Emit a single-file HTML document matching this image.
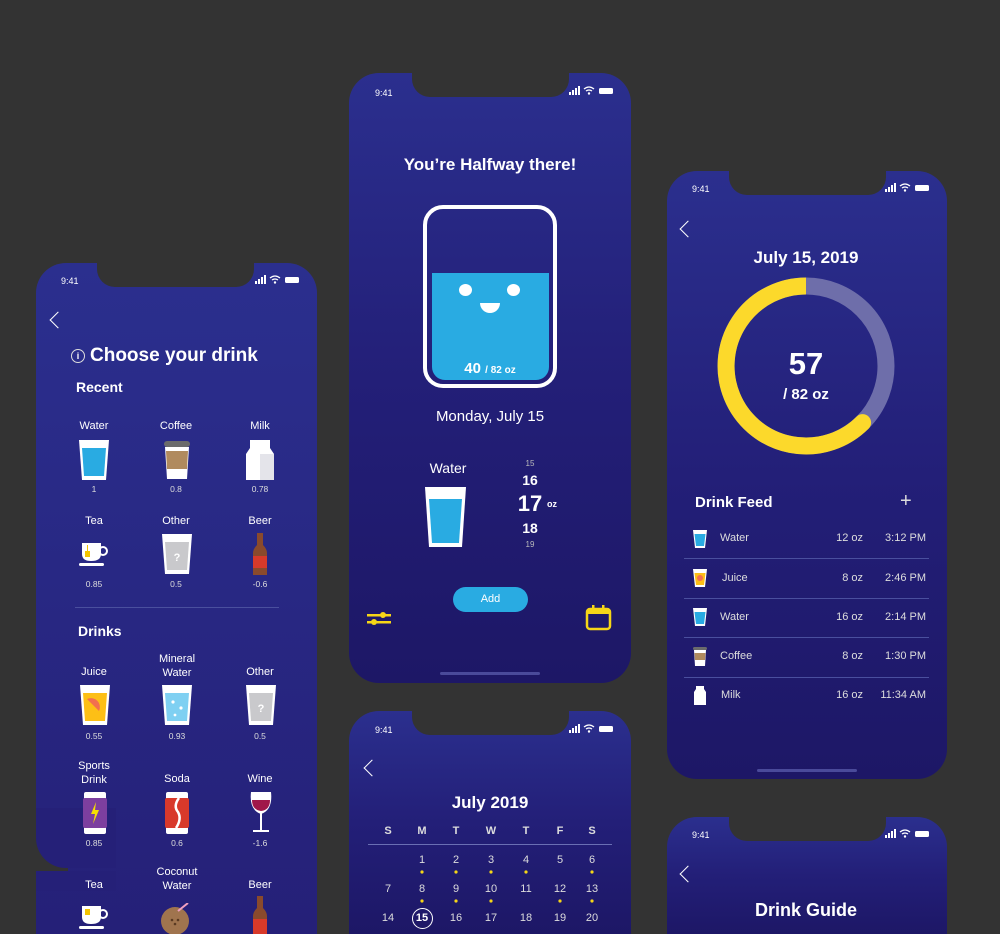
<!DOCTYPE html>
<html><head><meta charset="utf-8"><style>
*{margin:0;padding:0;box-sizing:border-box}
html,body{width:1000px;height:934px;overflow:hidden;background:#333}
body{font-family:"Liberation Sans",sans-serif;color:#fff}
#w{position:relative;width:1000px;height:934px;overflow:hidden;background:#333}
.ph{position:absolute;border-radius:30px;background:linear-gradient(180deg,#2b2f8e 0%,#231f78 50%,#1d1766 100%);overflow:hidden}
.notch{position:absolute;top:0;height:24px;background:#333;border-radius:0 0 18px 18px}
.t{position:absolute;white-space:nowrap}
.c{transform:translateX(-50%);text-align:center}
.bk{position:absolute;width:12px;height:12px;border-left:1.6px solid #fff;border-bottom:1.6px solid #fff;transform:rotate(45deg)}
.lbl{font-size:11px;font-weight:normal}
.val{font-size:8.5px;color:#ddd}
.dv{position:absolute;height:1px;background:#4a4f9e}
</style></head><body><div id="w">

<!-- LEFT PHONE -->
<div class="ph" style="left:36px;top:263px;width:281px;height:671px;border-radius:30px 30px 0 0;background:linear-gradient(180deg,#2b2f8e 0%,#252078 100%)"></div>
<div class="notch" style="left:97px;top:263px;width:157px"></div>
<div style="position:absolute;left:36px;top:838px;width:32px;height:33px;background:#333"></div>
<div style="position:absolute;left:36px;top:808px;width:80px;height:60px;background:#252078;border-bottom-left-radius:30px"></div>
<div style="position:absolute;left:36px;top:871px;width:80px;height:20px;background:#252078"></div>
<div class="t" style="left:61px;top:276px;font-size:9px">9:41</div>
<svg style="position:absolute;left:255px;top:275px" width="56" height="10"><rect x="0" y="6" width="2" height="3" fill="#fff"/><rect x="3" y="4" width="2" height="5" fill="#fff"/><rect x="6" y="2" width="2" height="7" fill="#fff"/><rect x="9" y="0" width="2" height="9" fill="#fff"/><path d="M15 3 Q20 -1 25 3 M17 5 Q20 3 23 5" stroke="#fff" stroke-width="1.3" fill="none"/><circle cx="20" cy="7.5" r="1.2" fill="#fff"/><rect x="30" y="2" width="14" height="6" rx="1.5" fill="#fff"/></svg>
<div class="bk" style="left:52px;top:314px"></div>
<div class="t" style="left:71px;top:345px;font-size:19px;font-weight:bold"><span style="display:inline-block;width:14px;height:14px;border:1.3px solid #ddd;border-radius:50%;font-size:9px;text-align:center;line-height:12px;vertical-align:2px;margin-right:5px">i</span>Choose your drink</div>
<div class="t" style="left:76px;top:379px;font-size:14px;font-weight:bold">Recent</div>

<div class="t c lbl" style="left:94px;top:420px">Water</div>
<div class="t c lbl" style="left:176px;top:420px">Coffee</div>
<div class="t c lbl" style="left:260px;top:420px">Milk</div>
<svg style="position:absolute;left:78px;top:440px" width="32" height="40"><path d="M1 0H31L28 40H4Z" fill="#fff"/><path d="M4 8H28L26 36H6Z" fill="#29abe2"/></svg>
<svg style="position:absolute;left:162px;top:441px" width="30" height="38"><rect x="2" y="0" width="26" height="6" rx="3" fill="#6b6b6b"/><path d="M3 6H27L25 38H5Z" fill="#fff"/><path d="M4 10H26L25 28H5Z" fill="#b08a5e"/></svg>
<svg style="position:absolute;left:246px;top:440px" width="28" height="40"><path d="M4 0H24V8L28 14V40H0V14L4 8Z" fill="#fff"/><path d="M14 14V40H28V14Z" fill="#e4e4ea"/></svg>
<div class="t c val" style="left:94px;top:484px">1</div>
<div class="t c val" style="left:176px;top:484px">0.8</div>
<div class="t c val" style="left:260px;top:484px">0.78</div>

<div class="t c lbl" style="left:94px;top:515px">Tea</div>
<div class="t c lbl" style="left:176px;top:515px">Other</div>
<div class="t c lbl" style="left:260px;top:515px">Beer</div>
<svg style="position:absolute;left:79px;top:543px" width="32" height="24"><path d="M3 0H22V11Q22 18 12 18Q3 18 3 11Z" fill="#fff"/><circle cx="24" cy="8" r="4" fill="none" stroke="#fff" stroke-width="2"/><rect x="0" y="20" width="25" height="3" rx="1.5" fill="#fff"/><rect x="8" y="2" width="1" height="7" fill="#f4c400"/><rect x="6" y="8" width="5" height="6" fill="#f4c400"/></svg>
<svg style="position:absolute;left:161px;top:534px" width="32" height="40"><path d="M1 0H31L28 40H4Z" fill="#fff"/><path d="M4 8H28L26 36H6Z" fill="#c9c9cc"/><text x="16" y="27" font-size="11" font-weight="bold" fill="#fff" text-anchor="middle" font-family="Liberation Sans">?</text></svg>
<svg style="position:absolute;left:253px;top:533px" width="14" height="42"><rect x="4" y="0" width="6" height="12" fill="#8a4a2c"/><path d="M4 12Q0 16 0 20V42H14V20Q14 16 10 12Z" fill="#8a4a2c"/><rect x="0" y="23" width="14" height="12" fill="#d83a2a"/></svg>
<div class="t c val" style="left:94px;top:579px">0.85</div>
<div class="t c val" style="left:176px;top:579px">0.5</div>
<div class="t c val" style="left:260px;top:579px">-0.6</div>

<div class="dv" style="left:75px;top:607px;width:204px"></div>
<div class="t" style="left:78px;top:623px;font-size:14px;font-weight:bold">Drinks</div>

<div class="t c lbl" style="left:94px;top:666px">Juice</div>
<div class="t c lbl" style="left:177px;top:652px;line-height:14px">Mineral<br>Water</div>
<div class="t c lbl" style="left:260px;top:666px">Other</div>
<svg style="position:absolute;left:79px;top:685px" width="32" height="40"><path d="M1 0H31L28 40H4Z" fill="#fff"/><path d="M4 8H28L26 36H6Z" fill="#fdbf16"/><path d="M8 14 A9 9 0 0 1 20 26 Z" fill="#f26f4f"/></svg>
<svg style="position:absolute;left:161px;top:685px" width="32" height="40"><path d="M1 0H31L28 40H4Z" fill="#fff"/><path d="M4 8H28L26 36H6Z" fill="#7fd0f2"/><circle cx="12" cy="17" r="1.6" fill="#fff"/><circle cx="20" cy="23" r="1.6" fill="#fff"/><circle cx="14" cy="30" r="1.4" fill="#fff"/></svg>
<svg style="position:absolute;left:245px;top:685px" width="32" height="40"><path d="M1 0H31L28 40H4Z" fill="#fff"/><path d="M4 8H28L26 36H6Z" fill="#c9c9cc"/><text x="16" y="27" font-size="11" font-weight="bold" fill="#fff" text-anchor="middle" font-family="Liberation Sans">?</text></svg>
<div class="t c val" style="left:94px;top:731px">0.55</div>
<div class="t c val" style="left:177px;top:731px">0.93</div>
<div class="t c val" style="left:260px;top:731px">0.5</div>

<div class="t c lbl" style="left:94px;top:759px;line-height:14px">Sports<br>Drink</div>
<div class="t c lbl" style="left:177px;top:773px">Soda</div>
<div class="t c lbl" style="left:260px;top:773px">Wine</div>
<svg style="position:absolute;left:83px;top:792px" width="24" height="42"><rect x="1" y="0" width="22" height="42" rx="2" fill="#fff"/><rect x="0" y="6" width="24" height="30" rx="2" fill="#7d3f9f"/><path d="M13 10L8 22H12L10 32L16 18H12Z" fill="#f6e000"/></svg>
<svg style="position:absolute;left:165px;top:792px" width="24" height="42"><rect x="1" y="0" width="22" height="42" rx="2" fill="#fff"/><rect x="0" y="6" width="24" height="30" rx="2" fill="#d8392b"/><path d="M14 6Q8 14 13 20Q17 27 11 36" stroke="#fff" stroke-width="2.5" fill="none"/></svg>
<svg style="position:absolute;left:250px;top:792px" width="22" height="42"><path d="M1 0H21Q23 18 11 22Q-1 18 1 0Z" fill="#fff"/><path d="M2 8H20Q20 18 11 19Q2 18 2 8Z" fill="#a0174a"/><rect x="10" y="21" width="2" height="17" fill="#fff"/><rect x="3" y="38" width="16" height="2" fill="#fff"/></svg>
<div class="t c val" style="left:94px;top:838px">0.85</div>
<div class="t c val" style="left:177px;top:838px">0.6</div>
<div class="t c val" style="left:260px;top:838px">-1.6</div>

<div class="t c lbl" style="left:94px;top:879px">Tea</div>
<div class="t c lbl" style="left:177px;top:865px;line-height:14px">Coconut<br>Water</div>
<div class="t c lbl" style="left:260px;top:879px">Beer</div>
<svg style="position:absolute;left:79px;top:906px" width="32" height="24"><path d="M3 0H22V11Q22 18 12 18Q3 18 3 11Z" fill="#fff"/><circle cx="24" cy="8" r="4" fill="none" stroke="#fff" stroke-width="2"/><rect x="0" y="20" width="25" height="3" rx="1.5" fill="#fff"/><rect x="6" y="3" width="5" height="6" fill="#f4c400"/></svg>
<svg style="position:absolute;left:160px;top:903px" width="36" height="31"><circle cx="15" cy="18" r="14" fill="#a0744e"/><path d="M18 8L28 0" stroke="#f0a0c0" stroke-width="2"/><circle cx="12" cy="17" r="1.3" fill="#5a3a22"/><circle cx="18" cy="17" r="1.3" fill="#5a3a22"/><circle cx="15" cy="21" r="1.3" fill="#5a3a22"/></svg>
<svg style="position:absolute;left:253px;top:896px" width="14" height="38"><rect x="4" y="0" width="6" height="12" fill="#8a4a2c"/><path d="M4 12Q0 16 0 20V38H14V20Q14 16 10 12Z" fill="#8a4a2c"/><rect x="0" y="23" width="14" height="15" fill="#d83a2a"/></svg>

<!-- MIDDLE PHONE -->
<div class="ph" style="left:349px;top:73px;width:282px;height:610px"></div>
<div class="notch" style="left:412px;top:73px;width:157px"></div>
<div class="t" style="left:375px;top:88px;font-size:9px">9:41</div>
<svg style="position:absolute;left:569px;top:86px" width="56" height="10"><rect x="0" y="6" width="2" height="3" fill="#fff"/><rect x="3" y="4" width="2" height="5" fill="#fff"/><rect x="6" y="2" width="2" height="7" fill="#fff"/><rect x="9" y="0" width="2" height="9" fill="#fff"/><path d="M15 3 Q20 -1 25 3 M17 5 Q20 3 23 5" stroke="#fff" stroke-width="1.3" fill="none"/><circle cx="20" cy="7.5" r="1.2" fill="#fff"/><rect x="30" y="2" width="14" height="6" rx="1.5" fill="#fff"/></svg>
<div class="t c" style="left:490px;top:155px;font-size:17px;font-weight:bold">You’re Halfway there!</div>
<div style="position:absolute;left:423px;top:205px;width:134px;height:183px;border:4px solid #fff;border-radius:20px"></div>
<div style="position:absolute;left:432px;top:273px;width:117px;height:107px;background:#29abe2;border-radius:0 0 13px 13px"></div>
<div style="position:absolute;left:459px;top:284px;width:13px;height:12px;background:#fff;border-radius:50%"></div>
<div style="position:absolute;left:507px;top:284px;width:13px;height:12px;background:#fff;border-radius:50%"></div>
<div style="position:absolute;left:480px;top:303px;width:20px;height:10px;background:#fff;border-radius:0 0 10px 10px"></div>
<div class="t c" style="left:490px;top:360px;font-size:15px;font-weight:bold">40 <span style="font-size:10px;font-weight:bold">/ 82 oz</span></div>
<div class="t c" style="left:490px;top:408px;font-size:15px">Monday, July 15</div>
<div class="t c" style="left:448px;top:460px;font-size:14px">Water</div>
<svg style="position:absolute;left:424px;top:486px" width="43" height="62"><path d="M1 1H42L38 61H5Z" fill="#fff"/><path d="M5 13H38L35 57H8Z" fill="#29abe2"/></svg>
<div class="t c" style="left:530px;top:459px;font-size:8px;color:#bbb">15</div>
<div class="t c" style="left:530px;top:472px;font-size:14px;font-weight:bold">16</div>
<div class="t c" style="left:530px;top:491px;font-size:22px;font-weight:bold">17</div>
<div class="t" style="left:547px;top:499px;font-size:9px;font-weight:bold">oz</div>
<div class="t c" style="left:530px;top:520px;font-size:14px;font-weight:bold">18</div>
<div class="t c" style="left:530px;top:540px;font-size:8px;color:#bbb">19</div>
<div style="position:absolute;left:453px;top:587px;width:75px;height:25px;background:#29abe2;border-radius:13px;font-size:11px;text-align:center;line-height:25px">Add</div>
<svg style="position:absolute;left:367px;top:611px" width="26" height="16"><rect x="0" y="3" width="24" height="2.5" fill="#f6d617"/><rect x="0" y="10" width="24" height="2.5" fill="#f6d617"/><circle cx="16" cy="4" r="3" fill="#f6d617"/><circle cx="7" cy="11" r="3" fill="#f6d617"/></svg>
<svg style="position:absolute;left:585px;top:604px" width="28" height="28"><rect x="2" y="5" width="23" height="20" rx="3" fill="none" stroke="#f6d617" stroke-width="2.5"/><rect x="2" y="5" width="23" height="5" fill="#f6d617"/><rect x="7" y="1" width="2.5" height="6" fill="#f6d617"/><rect x="17" y="1" width="2.5" height="6" fill="#f6d617"/></svg>
<div style="position:absolute;left:440px;top:672px;width:100px;height:3px;background:#4a4a9a;border-radius:2px"></div>

<!-- CALENDAR PHONE -->
<div class="ph" style="left:349px;top:711px;width:282px;height:223px;border-radius:30px 30px 0 0"></div>
<div class="notch" style="left:412px;top:711px;width:157px"></div>
<div class="t" style="left:375px;top:725px;font-size:9px">9:41</div>
<svg style="position:absolute;left:569px;top:724px" width="56" height="10"><rect x="0" y="6" width="2" height="3" fill="#fff"/><rect x="3" y="4" width="2" height="5" fill="#fff"/><rect x="6" y="2" width="2" height="7" fill="#fff"/><rect x="9" y="0" width="2" height="9" fill="#fff"/><path d="M15 3 Q20 -1 25 3 M17 5 Q20 3 23 5" stroke="#fff" stroke-width="1.3" fill="none"/><circle cx="20" cy="7.5" r="1.2" fill="#fff"/><rect x="30" y="2" width="14" height="6" rx="1.5" fill="#fff"/></svg>
<div class="bk" style="left:366px;top:762px"></div>
<div class="t c" style="left:490px;top:793px;font-size:17px;font-weight:bold">July 2019</div>
<div style="position:absolute;left:368px;top:825px;width:244px;font-size:11px;font-weight:bold;color:#ddd">
<span class="t c" style="left:20px">S</span><span class="t c" style="left:54px">M</span><span class="t c" style="left:88px">T</span><span class="t c" style="left:123px">W</span><span class="t c" style="left:158px">T</span><span class="t c" style="left:192px">F</span><span class="t c" style="left:224px">S</span></div>
<div class="dv" style="left:368px;top:844px;width:244px;background:#6a6fb4"></div>
<div style="position:absolute;left:368px;top:0;font-size:11px;color:#ddd">
<span class="t c" style="left:54px;top:854px">1</span><span class="t c" style="left:88px;top:854px">2</span><span class="t c" style="left:123px;top:854px">3</span><span class="t c" style="left:158px;top:854px">4</span><span class="t c" style="left:192px;top:854px">5</span><span class="t c" style="left:224px;top:854px">6</span>
<span class="t c" style="left:20px;top:883px">7</span><span class="t c" style="left:54px;top:883px">8</span><span class="t c" style="left:88px;top:883px">9</span><span class="t c" style="left:123px;top:883px">10</span><span class="t c" style="left:158px;top:883px">11</span><span class="t c" style="left:192px;top:883px">12</span><span class="t c" style="left:224px;top:883px">13</span>
<span class="t c" style="left:20px;top:912px">14</span><span class="t c" style="left:54px;top:912px;font-weight:bold;color:#fff">15</span><span class="t c" style="left:88px;top:912px">16</span><span class="t c" style="left:123px;top:912px">17</span><span class="t c" style="left:158px;top:912px">18</span><span class="t c" style="left:192px;top:912px">19</span><span class="t c" style="left:224px;top:912px">20</span></div>
<div style="position:absolute;left:412px;top:908px;width:21px;height:21px;border:1.3px solid #fff;border-radius:50%"></div>
<svg style="position:absolute;left:368px;top:868px" width="244" height="36" fill="#f6d617"><circle cx="54" cy="4" r="1.6"/><circle cx="88" cy="4" r="1.6"/><circle cx="123" cy="4" r="1.6"/><circle cx="158" cy="4" r="1.6"/><circle cx="224" cy="4" r="1.6"/><circle cx="54" cy="33" r="1.6"/><circle cx="88" cy="33" r="1.6"/><circle cx="123" cy="33" r="1.6"/><circle cx="192" cy="33" r="1.6"/><circle cx="224" cy="33" r="1.6"/></svg>

<!-- RIGHT PHONE -->
<div class="ph" style="left:667px;top:171px;width:280px;height:608px"></div>
<div class="notch" style="left:729px;top:171px;width:157px"></div>
<div class="t" style="left:692px;top:184px;font-size:9px">9:41</div>
<svg style="position:absolute;left:885px;top:183px" width="56" height="10"><rect x="0" y="6" width="2" height="3" fill="#fff"/><rect x="3" y="4" width="2" height="5" fill="#fff"/><rect x="6" y="2" width="2" height="7" fill="#fff"/><rect x="9" y="0" width="2" height="9" fill="#fff"/><path d="M15 3 Q20 -1 25 3 M17 5 Q20 3 23 5" stroke="#fff" stroke-width="1.3" fill="none"/><circle cx="20" cy="7.5" r="1.2" fill="#fff"/><rect x="30" y="2" width="14" height="6" rx="1.5" fill="#fff"/></svg>
<div class="bk" style="left:682px;top:223px"></div>
<div class="t c" style="left:806px;top:248px;font-size:17px;font-weight:bold">July 15, 2019</div>
<svg style="position:absolute;left:716px;top:276px" width="180" height="180"><circle cx="90" cy="90" r="80" fill="none" stroke="#6e6eaa" stroke-width="17"/><path d="M90 10 A80 80 0 1 0 146.6 146.6" fill="none" stroke="#fcd92b" stroke-width="17"/><circle cx="146.6" cy="146.6" r="8.5" fill="#fcd92b"/></svg>
<div class="t c" style="left:806px;top:346px;font-size:31px;font-weight:bold">57</div>
<div class="t c" style="left:806px;top:386px;font-size:15px;font-weight:bold">/ 82 oz</div>
<div class="t" style="left:695px;top:494px;font-size:15px;font-weight:bold">Drink Feed</div>
<div class="t" style="left:900px;top:490px;font-size:20px;font-weight:normal;color:#ddd">+</div>
<div class="dv" style="left:684px;top:558px;width:245px"></div>
<div class="dv" style="left:684px;top:598px;width:245px"></div>
<div class="dv" style="left:684px;top:637px;width:245px"></div>
<div class="dv" style="left:684px;top:677px;width:245px"></div>
<svg style="position:absolute;left:693px;top:530px" width="14" height="18"><path d="M0 0H14L12 18H2Z" fill="#fff"/><path d="M1.5 4H12.5L11 16H3Z" fill="#29abe2"/></svg>
<svg style="position:absolute;left:693px;top:569px" width="14" height="18"><path d="M0 0H14L12 18H2Z" fill="#fff"/><path d="M1.5 4H12.5L11 16H3Z" fill="#fdbf16"/><circle cx="7" cy="9" r="3" fill="#f26f4f"/></svg>
<svg style="position:absolute;left:693px;top:608px" width="14" height="18"><path d="M0 0H14L12 18H2Z" fill="#fff"/><path d="M1.5 4H12.5L11 16H3Z" fill="#29abe2"/></svg>
<svg style="position:absolute;left:693px;top:647px" width="14" height="19"><rect x="0" y="0" width="14" height="3" rx="1.5" fill="#6b6b6b"/><path d="M1 3H13L12 19H2Z" fill="#fff"/><path d="M1.5 6H12.5L12 13H2Z" fill="#b08a5e"/></svg>
<svg style="position:absolute;left:694px;top:686px" width="12" height="19"><path d="M2 0H10V3L12 6V19H0V6L2 3Z" fill="#fff"/></svg>
<div style="position:absolute;left:720px;top:532px;font-size:11px;color:#ddd;width:206px">
<div class="t" style="left:0;top:0">Water</div><div class="t" style="right:63px;top:0">12 oz</div><div class="t" style="right:0;top:0">3:12 PM</div>
<div class="t" style="left:2px;top:40px">Juice</div><div class="t" style="right:63px;top:40px">8 oz</div><div class="t" style="right:0;top:40px">2:46 PM</div>
<div class="t" style="left:0;top:79px">Water</div><div class="t" style="right:63px;top:79px">16 oz</div><div class="t" style="right:0;top:79px">2:14 PM</div>
<div class="t" style="left:0;top:118px">Coffee</div><div class="t" style="right:63px;top:118px">8 oz</div><div class="t" style="right:0;top:118px">1:30 PM</div>
<div class="t" style="left:1px;top:157px">Milk</div><div class="t" style="right:63px;top:157px">16 oz</div><div class="t" style="right:0;top:157px">11:34 AM</div>
</div>
<div style="position:absolute;left:757px;top:769px;width:100px;height:3px;background:#4a4a9a;border-radius:2px"></div>

<!-- DRINK GUIDE PHONE -->
<div class="ph" style="left:667px;top:817px;width:280px;height:117px;border-radius:30px 30px 0 0"></div>
<div class="notch" style="left:729px;top:817px;width:157px"></div>
<div class="t" style="left:692px;top:830px;font-size:9px">9:41</div>
<svg style="position:absolute;left:885px;top:829px" width="56" height="10"><rect x="0" y="6" width="2" height="3" fill="#fff"/><rect x="3" y="4" width="2" height="5" fill="#fff"/><rect x="6" y="2" width="2" height="7" fill="#fff"/><rect x="9" y="0" width="2" height="9" fill="#fff"/><path d="M15 3 Q20 -1 25 3 M17 5 Q20 3 23 5" stroke="#fff" stroke-width="1.3" fill="none"/><circle cx="20" cy="7.5" r="1.2" fill="#fff"/><rect x="30" y="2" width="14" height="6" rx="1.5" fill="#fff"/></svg>
<div class="bk" style="left:682px;top:868px"></div>
<div class="t c" style="left:806px;top:900px;font-size:18px;font-weight:bold">Drink Guide</div>
</div></body></html>
